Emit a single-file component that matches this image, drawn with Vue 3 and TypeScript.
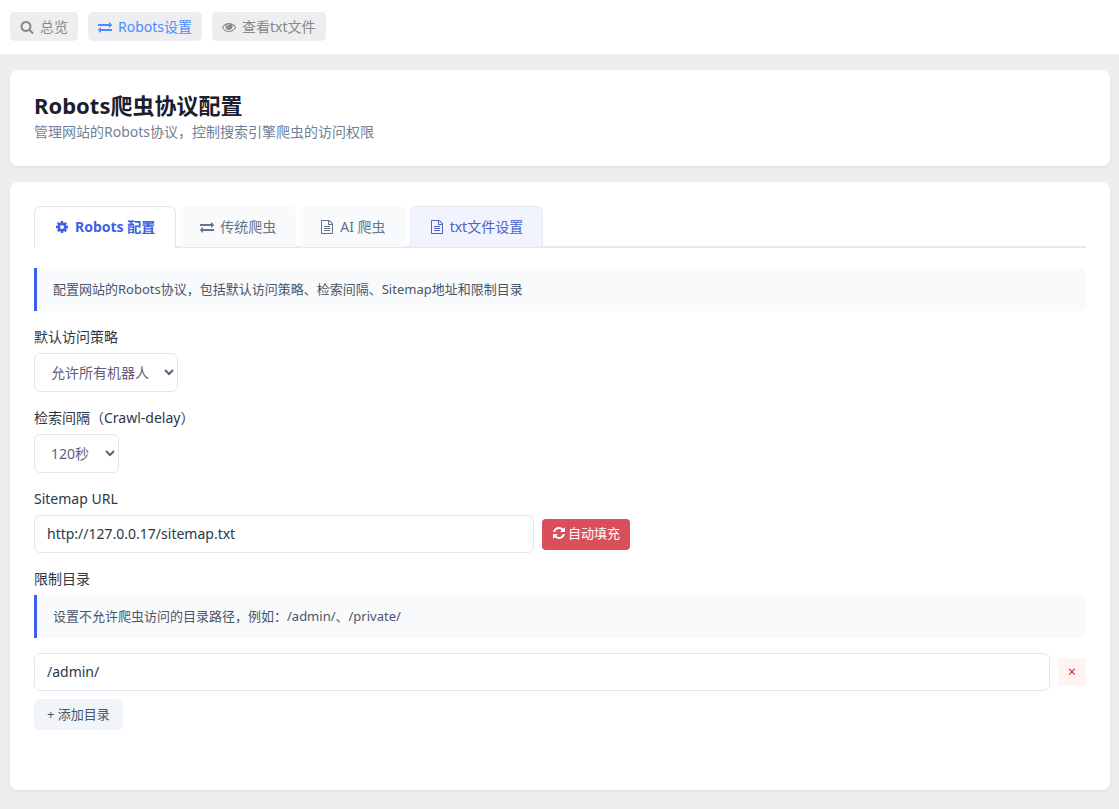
<script setup lang="ts">
import { ref } from 'vue'

type IconName = 'search' | 'exchange' | 'eye' | 'cog' | 'file' | 'refresh'

const icons: Record<IconName, string> = {
  search:
    'M1216 832q0-185-131.5-316.5t-316.5-131.5-316.5 131.5-131.5 316.5 131.5 316.5 316.5 131.5 316.5-131.5 131.5-316.5zm512 832q0 52-38 90t-90 38q-54 0-90-38l-343-342q-179 124-399 124-143 0-273.5-55.5t-225-150-150-225-55.5-273.5 55.5-273.5 150-225 225-150 273.5-55.5 273.5 55.5 225 150 150 225 55.5 273.5q0 220-124 399l343 343q37 37 37 90z',
  exchange:
    'M1792 1184v192q0 13-9.5 22.5t-22.5 9.5h-1376v192q0 13-9.5 22.5t-22.5 9.5q-12 0-24-10l-319-320q-9-9-9-22 0-14 9-23l320-320q9-9 23-9 13 0 22.5 9.5t9.5 22.5v192h1376q13 0 22.5 9.5t9.5 22.5zm0-544q0 14-9 23l-320 320q-9 9-23 9-13 0-22.5-9.5t-9.5-22.5v-192h-1376q-13 0-22.5-9.5t-9.5-22.5v-192q0-13 9.5-22.5t22.5-9.5h1376v-192q0-14 9-23t23-9q12 0 24 10l319 319q9 9 9 23z',
  eye:
    'M1664 960q-152-236-381-353 61 104 61 225 0 185-131.5 316.5t-316.5 131.5-316.5-131.5-131.5-316.5q0-121 61-225-229 117-381 353 133 205 333.5 326.5t434.5 121.5 434.5-121.5 333.5-326.5zm-720-384q0-20-14-34t-34-14q-125 0-214.5 89.5t-89.5 214.5q0 20 14 34t34 14 34-14 14-34q0-86 61-147t147-61q20 0 34-14t14-34zm848 384q0 34-20 69-140 230-376.5 368.5t-499.5 138.5-499.5-139-376.5-368q-20-35-20-69t20-69q140-229 376.5-368t499.5-139 499.5 139 376.5 368q20 35 20 69z',
  cog:
    'M1152 896q0-106-75-181t-181-75-181 75-75 181 75 181 181 75 181-75 75-181zm512-109v222q0 12-8 23t-20 13l-185 28q-19 54-39 91 35 50 107 138 10 12 10 25t-9 23q-27 37-99 108t-94 71q-12 0-26-9l-138-108q-44 23-91 38-16 136-29 186-7 28-36 28h-222q-14 0-24.5-8.5t-11.5-21.5l-28-184q-49-16-90-37l-141 107q-10 9-25 9-14 0-25-11-126-114-165-168-7-10-7-23 0-12 8-23 15-21 51-66.5t54-70.5q-27-50-41-99l-183-27q-13-2-21-12.5t-8-23.5v-222q0-12 8-23t19-13l186-28q14-46 39-92-40-57-107-138-10-12-10-24 0-10 9-23 26-36 98.5-107.5t94.5-71.5q13 0 26 10l138 107q44-23 91-38 16-136 29-186 7-28 36-28h222q14 0 24.5 8.5t11.5 21.5l28 184q49 16 90 37l142-107q9-9 24-9 13 0 25 10 129 119 165 170 7 8 7 22 0 12-8 23-15 21-51 66.5t-54 70.5q26 50 41 98l183 28q13 2 21 12.5t8 23.5z',
  file:
    'M1596 380q28 28 48 76t20 88v1152q0 40-28 68t-68 28h-1344q-40 0-68-28t-28-68v-1600q0-40 28-68t68-28h896q40 0 88 20t76 48zm-444-244v376h376q-10-29-22-41l-313-313q-12-12-41-22zm384 1528v-1024h-416q-40 0-68-28t-28-68v-416h-768v1536h1280zm-1024-864q0-14 9-23t23-9h704q14 0 23 9t9 23v64q0 14-9 23t-23 9h-704q-14 0-23-9t-9-23v-64zm736 224q14 0 23 9t9 23v64q0 14-9 23t-23 9h-704q-14 0-23-9t-9-23v-64q0-14 9-23t23-9h704zm0 256q14 0 23 9t9 23v64q0 14-9 23t-23 9h-704q-14 0-23-9t-9-23v-64q0-14 9-23t23-9h704z',
  refresh:
    'M1639 1056q0 5-1 7-64 268-268 434.5t-478 166.5q-146 0-282.5-55t-243.5-157l-129 129q-19 19-45 19t-45-19-19-45v-448q0-26 19-45t45-19h448q26 0 45 19t19 45-19 45l-137 137q71 66 161 102t187 36q134 0 250-65t186-179q11-17 53-117 8-23 30-23h192q13 0 22.5 9.5t9.5 22.5zm25-800v448q0 26-19 45t-45 19h-448q-26 0-45-19t-19-45 19-45l138-138q-148-137-349-137-134 0-250 65t-186 179q-11 17-53 117-8 23-30 23h-199q-13 0-22.5-9.5t-9.5-22.5v-7q65-268 270-434.5t480-166.5q146 0 284 55.5t245 156.5l130-129q19-19 45-19t45 19 19 45z',
}

interface Item {
  icon: IconName
  label: string
}

const navItems: Item[] = [
  { icon: 'search', label: '总览' },
  { icon: 'exchange', label: 'Robots设置' },
  { icon: 'eye', label: '查看txt文件' },
]

const tabs: Item[] = [
  { icon: 'cog', label: 'Robots 配置' },
  { icon: 'exchange', label: '传统爬虫' },
  { icon: 'file', label: 'AI 爬虫' },
  { icon: 'file', label: 'txt文件设置' },
]

const activeTab = ref(0)
const policy = ref('allow')
const delay = ref('120')
const sitemap = ref('http://127.0.0.17/sitemap.txt')
const directories = ref<string[]>(['/admin/'])

function fillSitemap() {
  sitemap.value = 'http://127.0.0.17/sitemap.txt'
}
</script>

<template>
  <nav class="topbar">
    <a
      v-for="(item, i) in navItems"
      :key="item.label"
      href="#"
      class="nav-link"
      :class="{ current: i === 1 }"
    >
      <svg class="icon" viewBox="0 0 1792 1792" aria-hidden="true"><path :d="icons[item.icon]" /></svg>
      <span>{{ item.label }}</span>
    </a>
  </nav>

  <main class="content">
    <header class="card">
      <h1>Robots爬虫协议配置</h1>
      <p class="subtitle">管理网站的Robots协议，控制搜索引擎爬虫的访问权限</p>
    </header>

    <section class="card settings">
      <div class="tabs" role="tablist">
        <button
          v-for="(tab, i) in tabs"
          :key="tab.label"
          type="button"
          role="tab"
          class="tab"
          :class="{ active: i === activeTab, highlighted: i === 3 }"
          :aria-selected="i === activeTab"
          @click="activeTab = i"
        >
          <svg class="icon" viewBox="0 0 1792 1792" aria-hidden="true"><path :d="icons[tab.icon]" /></svg>
          <span>{{ tab.label }}</span>
        </button>
      </div>

      <p class="hint">配置网站的Robots协议，包括默认访问策略、检索间隔、Sitemap地址和限制目录</p>

      <div class="field">
        <label for="policy">默认访问策略</label>
        <select id="policy" v-model="policy">
          <option value="allow">允许所有机器人</option>
          <option value="deny">禁止</option>
        </select>
      </div>

      <div class="field">
        <label for="delay">检索间隔（Crawl-delay）</label>
        <select id="delay" v-model="delay">
          <option value="60">60秒</option>
          <option value="120">120秒</option>
        </select>
      </div>

      <div class="field">
        <label for="sitemap">Sitemap URL</label>
        <div class="row">
          <input id="sitemap" v-model="sitemap" class="url" type="text" />
          <button type="button" class="fill" @click="fillSitemap">
            <svg class="icon" viewBox="0 0 1792 1792" aria-hidden="true"><path :d="icons.refresh" /></svg>
            <span>自动填充</span>
          </button>
        </div>
      </div>

      <div class="field">
        <label for="directory-0">限制目录</label>
        <p class="hint">设置不允许爬虫访问的目录路径，例如：/admin/、/private/</p>
        <div class="directories">
          <div v-for="(_, i) in directories" :key="i" class="row">
            <input :id="`directory-${i}`" v-model="directories[i]" type="text" />
            <button type="button" class="remove" aria-label="删除" @click="directories.splice(i, 1)">×</button>
          </div>
          <button type="button" class="add" @click="directories.push('')">+ 添加目录</button>
        </div>
      </div>
    </section>
  </main>
</template>

<style>
body {
  margin: 0;
  background: #edeef0;
  font-family: 'Noto Sans', 'Noto Sans CJK SC', sans-serif;
  font-size: 14px;
  line-height: 20px;
}

*,
*::before,
*::after {
  box-sizing: border-box;
}
</style>

<style scoped>
h1,
p {
  margin: 0;
}

button,
input,
select {
  font: inherit;
}

button {
  border: 0;
  cursor: pointer;
}

.icon {
  flex: none;
  width: 14px;
  height: 14px;
  fill: currentColor;
}

.topbar {
  display: flex;
  gap: 10px;
  padding: 12px 10px 13px;
  background: #fff;
}

.nav-link {
  display: flex;
  align-items: center;
  gap: 6px;
  height: 29px;
  padding: 0 10px;
  border-radius: 5px;
  background: #edeef0;
  color: #888;
  text-decoration: none;
}

.nav-link.current {
  color: #4a8cff;
}

.content {
  display: flex;
  flex-direction: column;
  gap: 16px;
  padding: 16px 9px 19px 10px;
}

.card {
  padding: 24px;
  border-radius: 8px;
  background: #fff;
  box-shadow: 0 1px 3px rgba(0, 0, 0, 0.08);
}

h1 {
  margin-bottom: 6px;
  color: #1a202c;
  font-size: 22px;
  font-weight: 700;
  line-height: 22px;
}

.subtitle {
  color: #718096;
}

.settings {
  padding-bottom: 60px;
}

.tabs {
  display: flex;
  gap: 4px;
  height: 42px;
  margin-bottom: 20px;
  box-shadow: inset 0 -2px #e2e8f0;
}

.tab {
  display: flex;
  align-items: center;
  gap: 6px;
  height: 41px;
  padding: 0 19px;
  border: 1px solid transparent;
  border-bottom: 0;
  border-radius: 6px 6px 0 0;
  background: #f8fafc;
  color: #64748b;
}

.tab.active {
  height: 42px;
  padding: 0 20px 2px;
  border-color: #e2e8f0;
  background: #fff;
  color: #3b5fe8;
  font-weight: 700;
}

.tab.highlighted {
  border-color: #e4e9f5;
  background: #f1f4fe;
  color: #4c63c4;
}

.hint {
  padding: 11px 16px;
  border-left: 3px solid #3b5fe8;
  border-radius: 0 6px 6px 0;
  background: #f8fafc;
  color: #4a5568;
  font-size: 13px;
  line-height: 21px;
}

.field {
  display: flex;
  flex-direction: column;
  align-items: flex-start;
  gap: 6px;
  margin-top: 16px;
  color: #2d3748;
}

.field .hint {
  align-self: stretch;
}

select {
  height: 39px;
  padding: 0 0 0 12px;
  border: 1px solid #e2e8f0;
  border-radius: 6px;
  background: #fff;
  color: #5f5f7b;
}

#policy {
  width: 144px;
}

#delay {
  width: 85px;
}

input {
  flex: 1;
  min-width: 0;
  height: 38px;
  padding: 0 12px 2px;
  border: 1px solid #e2e8f0;
  border-radius: 6px;
  background: #fff;
  color: #2d3748;
}

.row {
  display: flex;
  align-items: center;
  align-self: stretch;
  gap: 8px;
}

.url {
  flex: 0 1 500px;
}

.fill {
  display: flex;
  align-items: center;
  gap: 2px;
  height: 31px;
  padding: 0 10px 2px;
  border-radius: 4px;
  background: #d94f5c;
  color: #fff;
  font-size: 13px;
}

.directories {
  display: flex;
  flex-direction: column;
  align-items: flex-start;
  align-self: stretch;
  gap: 8px;
  margin-top: 9px;
}

.remove {
  width: 28px;
  height: 28px;
  padding: 0;
  border-radius: 4px;
  background: #fef2f2;
  color: #dc2626;
  font-size: 14px;
}

.add {
  height: 31px;
  padding: 0 13px 2px;
  border-radius: 6px;
  background: #f1f5f9;
  color: #475569;
  font-size: 13px;
}
</style>
